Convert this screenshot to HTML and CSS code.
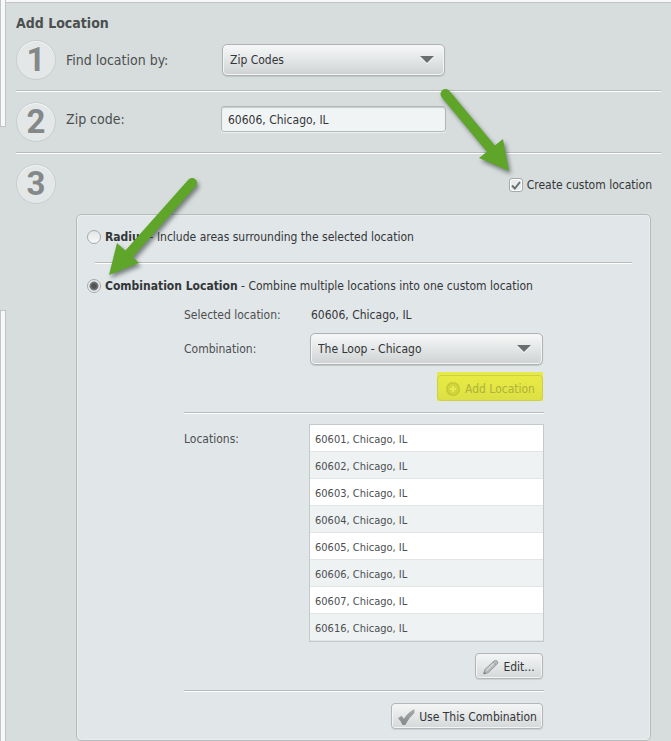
FILE: index.html
```html
<!DOCTYPE html>
<html lang="en">
<head>
<meta charset="utf-8">
<title>Add Location</title>
<link rel="stylesheet" href="styles.css">
</head>
<body>
<div class="page">
  <div class="rail">
    <div class="rail-box rail-top"></div>
    <div class="rail-box rail-bottom"></div>
  </div>
  <main class="content">
    <h1>Add Location</h1>
    <section class="step">
      <span class="number">1</span>
      <label class="step-label" for="find">Find location by:</label>
      <div class="select step-field">
        <select id="find"><option>Zip Codes</option></select>
      </div>
    </section>
    <section class="step">
      <span class="number">2</span>
      <label class="step-label" for="zip">Zip code:</label>
      <input class="text step-field" id="zip" type="text" value="60606, Chicago, IL">
    </section>
    <section class="step last">
      <span class="number">3</span>
      <label class="custom"><input type="checkbox" checked><svg class="tick" viewBox="0 0 14 14" aria-hidden="true"><path d="M3 7.5 5.8 10.5 11 4"/></svg>Create custom location</label>
    </section>
    <div class="panel">
      <label class="choice"><input type="radio" name="mode"><span><b>Radius</b> - Include areas surrounding the selected location</span></label>
      <hr class="choice-rule">
      <label class="choice"><input type="radio" name="mode" checked><span><b>Combination Location</b> - Combine multiple locations into one custom location</span></label>
      <div class="details">
        <div class="row selected"><span>Selected location:</span><span class="value">60606, Chicago, IL</span></div>
        <div class="row combination">
          <label for="combo">Combination:</label>
          <div class="select"><select id="combo"><option>The Loop - Chicago</option></select></div>
        </div>
        <div class="highlight">
          <button class="button add" type="button" disabled>
            <svg width="16" height="16" viewBox="0 0 16 16" aria-hidden="true"><circle cx="8" cy="8" r="6.2" fill="#d3d63c" stroke="#c6c934" stroke-width="1.6"/><path d="M8 5v6M5 8h6" stroke="#e8eb50" stroke-width="2"/></svg>Add Location
          </button>
        </div>
        <hr>
        <div class="row locations">
          <span class="list-label">Locations:</span>
          <ul>
            <li>60601, Chicago, IL</li>
            <li>60602, Chicago, IL</li>
            <li>60603, Chicago, IL</li>
            <li>60604, Chicago, IL</li>
            <li>60605, Chicago, IL</li>
            <li>60606, Chicago, IL</li>
            <li>60607, Chicago, IL</li>
            <li>60616, Chicago, IL</li>
          </ul>
        </div>
        <button class="button edit" type="button">
          <svg width="16" height="16" viewBox="0 0 16 16" aria-hidden="true"><path d="M.8 14.8 1.6 10.8 11 2Q12.6.8 14 2 15.4 3.4 14.2 5L5 13.8Z" fill="#b8baba" stroke="#9a9d9d"/><path d="M3.6 11.2 11.8 3.6" stroke="#d6d8d8" stroke-width="1.4"/><path d="M10.2 3 13.2 6" stroke="#9a9d9d"/><path d="M.6 15.2 1 12.4 3.4 14.4Z" fill="#808383"/></svg>Edit...
        </button>
        <hr>
        <button class="button use" type="button">
          <svg width="18" height="18" viewBox="0 0 18 18" aria-hidden="true"><defs><linearGradient id="mark" x1="0" y1="0" x2="0" y2="1"><stop offset="0" stop-color="#a9abab"/><stop offset="1" stop-color="#858888"/></linearGradient></defs><path d="M1 10.3 4.4 7.7 7 10.8Q10.8 4.4 17.4 1V5Q11.8 9.8 8.2 17H5.6Q3.8 12.8 1 10.3Z" fill="url(#mark)"/></svg>Use This Combination
        </button>
      </div>
    </div>
  </main>
  <svg class="arrow arrow-check" width="84" height="100" viewBox="0 0 84 100" aria-hidden="true"><path class="shaft" d="M13.5 10 60 66"/><path d="M71 55 77 87 47 74Z"/></svg>
  <svg class="arrow arrow-radio" width="104" height="112" viewBox="0 0 104 112" aria-hidden="true"><path class="shaft" d="M96 9 32 81"/><path d="M21 69 43 89 13 101Z"/></svg>
</div>
</body>
</html>
```

FILE: styles.css
```css
* {
  box-sizing: border-box;
}

body {
  margin: 0;
  background: #d7dddc;
  color: #333638;
  font: 12px/18px "DejaVu Sans Condensed", "Noto Sans", sans-serif;
}

button,
input,
select {
  margin: 0;
  font: inherit;
  color: inherit;
}

.page {
  position: relative;
  display: flex;
  min-height: 100vh;
}

.rail {
  display: flex;
  flex-direction: column;
  gap: 183px;
  width: 6px;
}

.rail-box {
  border: solid #c2c5c5;
  border-width: 0 1px 1px 0;
  background: linear-gradient(90deg, #c2c5c5 1px, #f7f8f8 1px);
}

.rail-top {
  height: 127px;
}

.rail-bottom {
  flex: 1;
  border-width: 1px 1px 0 0;
}

.content {
  flex: 1;
  padding: 12px 10px 0;
  border-top: 2px solid #f7f8f8;
  box-shadow: inset 0 1px #c2c5c5;
}

h1 {
  margin: 0;
  color: #4c4f50;
  font-size: 14px;
  line-height: 18px;
}

hr {
  height: 2px;
  margin: 0;
  border: 0;
  background: linear-gradient(#b7babb 1px, #fff 1px);
}

.step {
  display: flex;
  align-items: flex-start;
  height: 62px;
  padding-top: 10px;
  border-bottom: 1px solid #fff;
  box-shadow: inset 0 -1px #b7babb;
}

h1 + .step {
  height: 60px;
  padding-top: 8px;
}

.step.last {
  height: 60px;
  border: 0;
  box-shadow: none;
}

.number {
  width: 40px;
  height: 40px;
  border: 1px solid #c9cecd;
  border-radius: 50%;
  background: #e3e7e8;
  box-shadow: inset 0 1px #f4f6f6;
  color: #858888;
  font: bold 33px/38px Roboto, Arial, sans-serif;
  text-align: center;
}

.step-label {
  width: 155px;
  padding: 8px 0 0 10px;
  color: #4c4f50;
  font-size: 14px;
}

h1 + .step .step-label {
  padding-top: 11px;
}

.step-field {
  width: 225px;
}

.select {
  position: relative;
  height: 32px;
  margin-top: 4px;
}

.step .select {
  margin-left: 10px;
  padding: 0 1px;
}

.select select {
  width: 100%;
  height: 100%;
  padding: 0 30px 0 7px;
  appearance: none;
  border: 1px solid #afb3b4;
  border-radius: 5px;
  background: linear-gradient(#f7f9f9, #cfd2d3);
  box-shadow: inset 0 0 0 1px #f3f5f5, 0 1px 1px #c0c5c5;
}

.select::after {
  position: absolute;
  top: 12px;
  right: 12px;
  border: solid transparent;
  border-width: 7px 7px 0;
  border-top-color: #6b6e6f;
  content: "";
  filter: drop-shadow(0 1px #fff);
  pointer-events: none;
}

.text {
  height: 26px;
  margin: 4px 0 0 10px;
  padding: 1px 6px 0;
  border: 1px solid #b3b7b8;
  border-radius: 3px;
  background: #f1f4f5;
  box-shadow: inset 0 1px 1px #c5c9ca, 0 1px #edf0f0;
}

.custom {
  position: relative;
  display: flex;
  align-items: center;
  gap: 4px;
  margin: 12px 9px 0 auto;
}

.custom input {
  width: 14px;
  height: 14px;
  appearance: none;
  border: 1px solid #a5a9aa;
  border-radius: 3px;
  background: #e9ecec;
  box-shadow: inset 0 0 0 1px #fff;
}

.tick {
  position: absolute;
  left: 0;
  width: 14px;
  height: 14px;
  fill: none;
  stroke: #6c6f70;
  stroke-width: 2;
}

.panel {
  margin: 0 10px 0 60px;
  padding: 13px 18px 11px 10px;
  border: 1px solid #b7babb;
  border-radius: 5px;
  background: #e1e6e8;
  box-shadow: inset 0 0 0 1px #e9eded;
}

.choice {
  display: flex;
  align-items: center;
  gap: 4px;
}

.choice input {
  width: 14px;
  height: 14px;
  appearance: none;
  border: 1px solid #a5a9aa;
  border-radius: 50%;
  background: linear-gradient(#e3e6e6, #f7f8f8);
}

.choice input:checked {
  background: radial-gradient(circle, #505455 0 2px, #787c7d 4px, #eceeee 5px);
}

.choice-rule {
  margin: 16px 0 13px 8px;
}

.details {
  display: flex;
  flex-direction: column;
  width: 360px;
  margin: 11px 0 0 97px;
  color: #4c4f50;
}

.row {
  display: grid;
  grid-template-columns: 125px 1fr;
}

.value {
  padding-left: 2px;
  color: #333638;
}

.combination {
  align-items: center;
  margin-top: 9px;
}

.combination .select {
  margin: 0 1px;
  color: #333638;
}

.highlight {
  align-self: flex-end;
  margin: 7px 1px 11px 0;
  padding-top: 3px;
  background: #e6e948;
}

.button {
  display: flex;
  align-items: center;
  align-self: flex-end;
  justify-content: center;
  gap: 4px;
  height: 26px;
  margin-right: 1px;
  padding: 1px 6px 0;
  border: 1px solid #b2b6b7;
  border-radius: 4px;
  background: linear-gradient(#f4f6f6, #d5d8d9);
  box-shadow: inset 0 0 0 1px #f3f5f5, 0 1px 1px #cbd0d1;
  color: #333638;
  white-space: nowrap;
}

.button svg {
  flex: none;
}

.button.add {
  width: 106px;
  margin: 0;
  border-color: #cdd044;
  background: linear-gradient(#e8eb43, #dde044);
  box-shadow: none;
  color: #aeb13b;
}

.locations {
  margin: 10px 0 11px;
}

.list-label {
  padding-top: 6px;
}

ul {
  margin: 0;
  padding: 0;
  border: 1px solid #c4c9ca;
  background: #fff;
  font-size: 11px;
  list-style: none;
}

li {
  height: 27px;
  padding: 0 5px;
  border-bottom: 1px solid #e1e5e6;
  line-height: 30px;
}

li:nth-child(even) {
  background: #eef2f3;
}

.edit {
  width: 68px;
  margin-bottom: 11px;
}

.use {
  width: 152px;
  margin-top: 11px;
}

.arrow {
  position: absolute;
  fill: #5fa529;
  filter: drop-shadow(2px 3px 2px rgba(50, 60, 60, 0.6));
  pointer-events: none;
}

.shaft {
  stroke: #5fa529;
  stroke-width: 10;
  stroke-linecap: round;
}

.arrow-check {
  top: 84px;
  left: 432px;
}

.arrow-radio {
  top: 174px;
  left: 96px;
}
```
